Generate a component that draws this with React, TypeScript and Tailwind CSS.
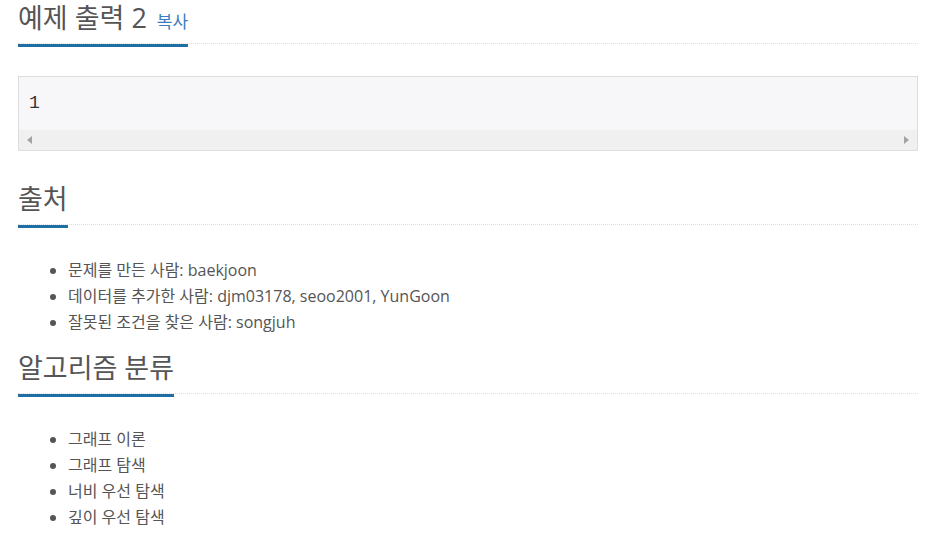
import React from 'react'

const font = { fontFamily: '"Open Sans", "Noto Sans CJK KR", sans-serif' }

function Headline({ title, copy }: { title: string; copy?: boolean }) {
  return (
    <div className="flex border-b border-dotted border-[#dddddd]">
      <h2 className="border-b-[3px] border-[#1f6ea5] -mb-[4px] pb-[8px] text-[27px] leading-[36px] font-normal text-[#555555]">
        {title}
        {copy && <span className="ml-[10px] text-[17px] leading-[20px] text-[#3b7bbf]">복사</span>}
      </h2>
    </div>
  )
}

function Section({ title, items }: { title: string; items: string[] }) {
  return (
    <section>
      <Headline title={title} />
      <ul className="list-disc mt-[32px] mb-[15px] pl-[50px] text-[16px] leading-[26px] text-[#555555] marker:text-[#555555]">
        {items.map((it) => (
          <li key={it}>{it}</li>
        ))}
      </ul>
    </section>
  )
}

export default function App() {
  return (
    <div className="min-h-screen bg-white px-[18px]" style={font}>
      {/* 예제 출력 */}
      <section>
        <Headline title="예제 출력 2" copy />
        <div className="mt-[32px] border border-[#dddddd] bg-[#f7f7f9]">
          <pre
            className="px-[10px] h-[53px] flex items-center text-[18px] text-[#333333]"
            style={{ fontFamily: '"Liberation Mono", "DejaVu Sans Mono", monospace' }}
          >
            1
          </pre>
          {/* scrollbar */}
          <div className="h-[20px] bg-[#f0f0f0] flex items-center justify-between px-[8px]">
            <svg width="5" height="8" viewBox="0 0 5 8">
              <path d="M5 0 L0 4 L5 8 Z" fill="#a3a3a3" />
            </svg>
            <svg width="5" height="8" viewBox="0 0 5 8">
              <path d="M0 0 L5 4 L0 8 Z" fill="#a3a3a3" />
            </svg>
          </div>
        </div>
      </section>

      <div className="mt-[30px]">
        <Section
          title="출처"
          items={[
            '문제를 만든 사람: baekjoon',
            '데이터를 추가한 사람: djm03178, seoo2001, YunGoon',
            '잘못된 조건을 찾은 사람: songjuh',
          ]}
        />
      </div>

      <Section title="알고리즘 분류" items={['그래프 이론', '그래프 탐색', '너비 우선 탐색', '깊이 우선 탐색']} />
    </div>
  )
}
